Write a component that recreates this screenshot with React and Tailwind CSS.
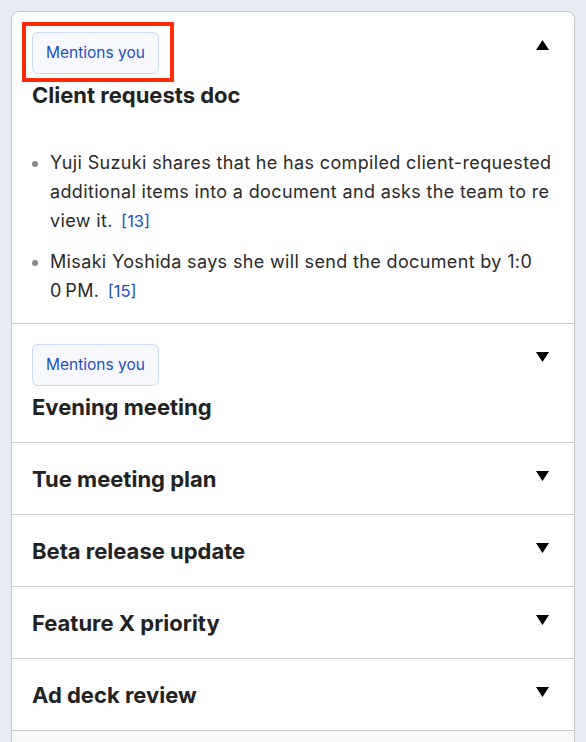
import { useState } from 'react'

const topics = [
  {
    title: 'Client requests doc',
    mention: true,
    open: true,
    points: [
      { text: 'Yuji Suzuki shares that he has compiled client-requested additional items into a document and asks the team to review it.', ref: 13 },
      { text: 'Misaki Yoshida says she will send the document by 1:00\u202FPM.', ref: 15 },
    ],
  },
  { title: 'Evening meeting', mention: true },
  { title: 'Tue meeting plan' },
  { title: 'Beta release update' },
  { title: 'Feature X priority' },
  { title: 'Ad deck review' },
]

const Caret = ({ up }) => (
  <svg width="13" height="10" viewBox="0 0 13 10" className="mt-[8px] shrink-0">
    {up ? <path d="M6.5 0 L13 10 L0 10 Z" fill="#000" /> : <path d="M0 0 L13 0 L6.5 10 Z" fill="#000" />}
  </svg>
)

const Badge = ({ highlight }) => (
  <div className="relative self-start mb-[5px]">
    <div className="h-[42px] px-[13px] flex items-center rounded-md border border-[#ccd9f1] bg-[#f6f8fc] text-[15.5px] text-[#1d4fc2]">
      Mentions you
    </div>
    {highlight && (
      <div className="absolute -left-[10px] -top-[10px] w-[152px] h-[60px] border-[4px] border-[#ff2a0a] pointer-events-none" />
    )}
  </div>
)

const Topic = ({ topic, first }) => {
  const [open, setOpen] = useState(!!topic.open)
  return (
    <div className={first ? '' : 'border-t border-[#c9c9c9]'}>
      <button
        onClick={() => setOpen(!open)}
        className="w-full flex items-start justify-between pl-[20px] pr-[25px] pt-[20px] pb-[19px] text-left"
      >
        <div className="flex flex-col">
          {topic.mention && <Badge highlight={first} />}
          <span className="text-[22px] leading-[32px] font-bold text-[#222]">{topic.title}</span>
        </div>
        <Caret up={open} />
      </button>
      {open && topic.points && (
        <ul className="list-disc pl-[38px] pr-[16px] pt-[18px] pb-[18px] space-y-[12px] marker:text-[#888] break-all">
          {topic.points.map((p) => (
            <li key={p.ref} className="text-[18px] leading-[29px] tracking-[0.35px] text-[#2a2a2a]">
              {p.text}{' '}
              <a href="#" className="whitespace-nowrap text-[16.5px] leading-none tracking-normal text-[#1d4fc2] ml-[3px]">[{p.ref}]</a>
            </li>
          ))}
        </ul>
      )}
    </div>
  )
}

export default function App() {
  return (
    <div className="min-h-screen bg-[#e8edf5] pl-[11px] pr-[11px] pt-[11px] overflow-hidden" style={{ fontFamily: 'Inter, "Noto Sans", sans-serif' }}>
      <div className="bg-white border border-[#c4c4c4] rounded-t-[8px] overflow-hidden h-[760px] flex flex-col">
        {topics.map((t, i) => (
          <Topic key={t.title} topic={t} first={i === 0} />
        ))}
        <div className="flex-1 border-t border-[#c9c9c9] bg-[#f8f9fb]" />
      </div>
    </div>
  )
}
